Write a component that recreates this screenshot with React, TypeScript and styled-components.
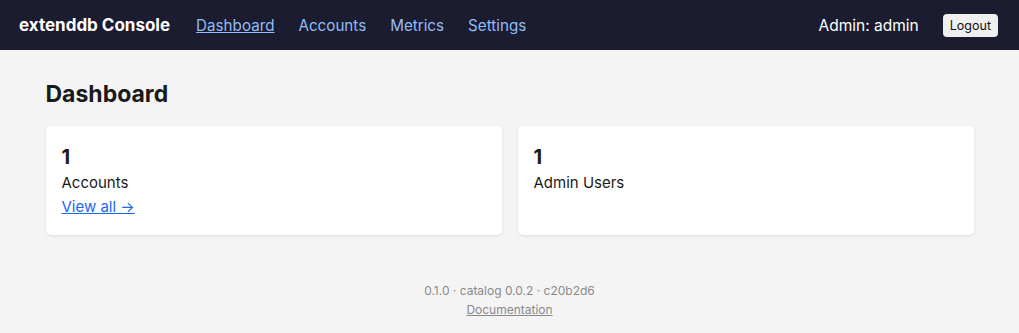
import React from "react";
import styled, { createGlobalStyle } from "styled-components";

const GlobalStyle = createGlobalStyle`
  body {
    margin: 0;
    background: #f4f4f4;
    font-family: Inter, "Noto Sans", "Liberation Sans", sans-serif;
    color: #1a1a1a;
  }
`;

const stats = [
  { value: 1, label: "Accounts", link: "View all →" },
  { value: 1, label: "Admin Users" },
];

export default function App() {
  return (
    <>
      <GlobalStyle />
      <Nav>
        <Brand>extenddb Console</Brand>
        <NavLinks>
          <NavLink href="#" $active>Dashboard</NavLink>
          <NavLink href="#">Accounts</NavLink>
          <NavLink href="#">Metrics</NavLink>
          <NavLink href="#">Settings</NavLink>
        </NavLinks>
        <UserArea>
          <UserName>Admin: admin</UserName>
          <LogoutButton>Logout</LogoutButton>
        </UserArea>
      </Nav>
      <Main>
        <Title>Dashboard</Title>
        <CardGrid>
          {stats.map((s) => (
            <Card key={s.label}>
              <Value>{s.value}</Value>
              <Label>{s.label}</Label>
              {s.link && <CardLink href="#">{s.link}</CardLink>}
            </Card>
          ))}
        </CardGrid>
      </Main>
      <Footer>
        <div>0.1.0 · catalog 0.0.2 · c20b2d6</div>
        <FooterLink href="#">Documentation</FooterLink>
      </Footer>
    </>
  );
}

const Nav = styled.nav`
  display: flex;
  align-items: center;
  height: 50px;
  padding: 0 21px 0 19px;
  background: #1b1c2f;
  color: #fff;
`;

const Brand = styled.div`
  font-size: 17px;
  font-weight: 700;
  margin-right: 26px;
`;

const NavLinks = styled.div`
  display: flex;
  gap: 24px;
  flex: 1;
`;

const NavLink = styled.a<{ $active?: boolean }>`
  font-size: 15.2px;
  color: #93bbf5;
  text-decoration: ${(p) => (p.$active ? "underline" : "none")};
`;

const UserArea = styled.div`
  display: flex;
  align-items: center;
  gap: 24px;
`;

const UserName = styled.span`
  font-size: 15.5px;
`;

const LogoutButton = styled.button`
  font-family: inherit;
  font-size: 12.5px;
  padding: 4px 7px;
  border: none;
  border-radius: 4px;
  background: #efefef;
  color: #111;
`;

const Main = styled.main`
  box-sizing: border-box;
  max-width: 960px;
  margin: 0 auto;
  padding: 30px 16px 0;
`;

const Title = styled.h1`
  font-size: 23px;
  font-weight: 700;
  margin: 0 0 18px;
`;

const CardGrid = styled.div`
  display: grid;
  grid-template-columns: 1fr 1fr;
  gap: 16px;
`;

const Card = styled.div`
  display: flex;
  flex-direction: column;
  height: 109px;
  box-sizing: border-box;
  padding: 20px 16px;
  background: #fff;
  border-radius: 5px;
  box-shadow: 0 1px 3px rgba(0, 0, 0, 0.1);
`;

const Value = styled.div`
  font-size: 20px;
  font-weight: 700;
  line-height: 22px;
  margin-bottom: 3px;
`;

const Label = styled.div`
  font-size: 15px;
  line-height: 24px;
`;

const CardLink = styled.a`
  font-size: 15px;
  line-height: 24px;
  color: #1a66f0;
`;

const Footer = styled.footer`
  margin-top: 46px;
  text-align: center;
  font-size: 12px;
  line-height: 19px;
  color: #8a8a8a;
`;

const FooterLink = styled.a`
  color: #8a8a8a;
`;
